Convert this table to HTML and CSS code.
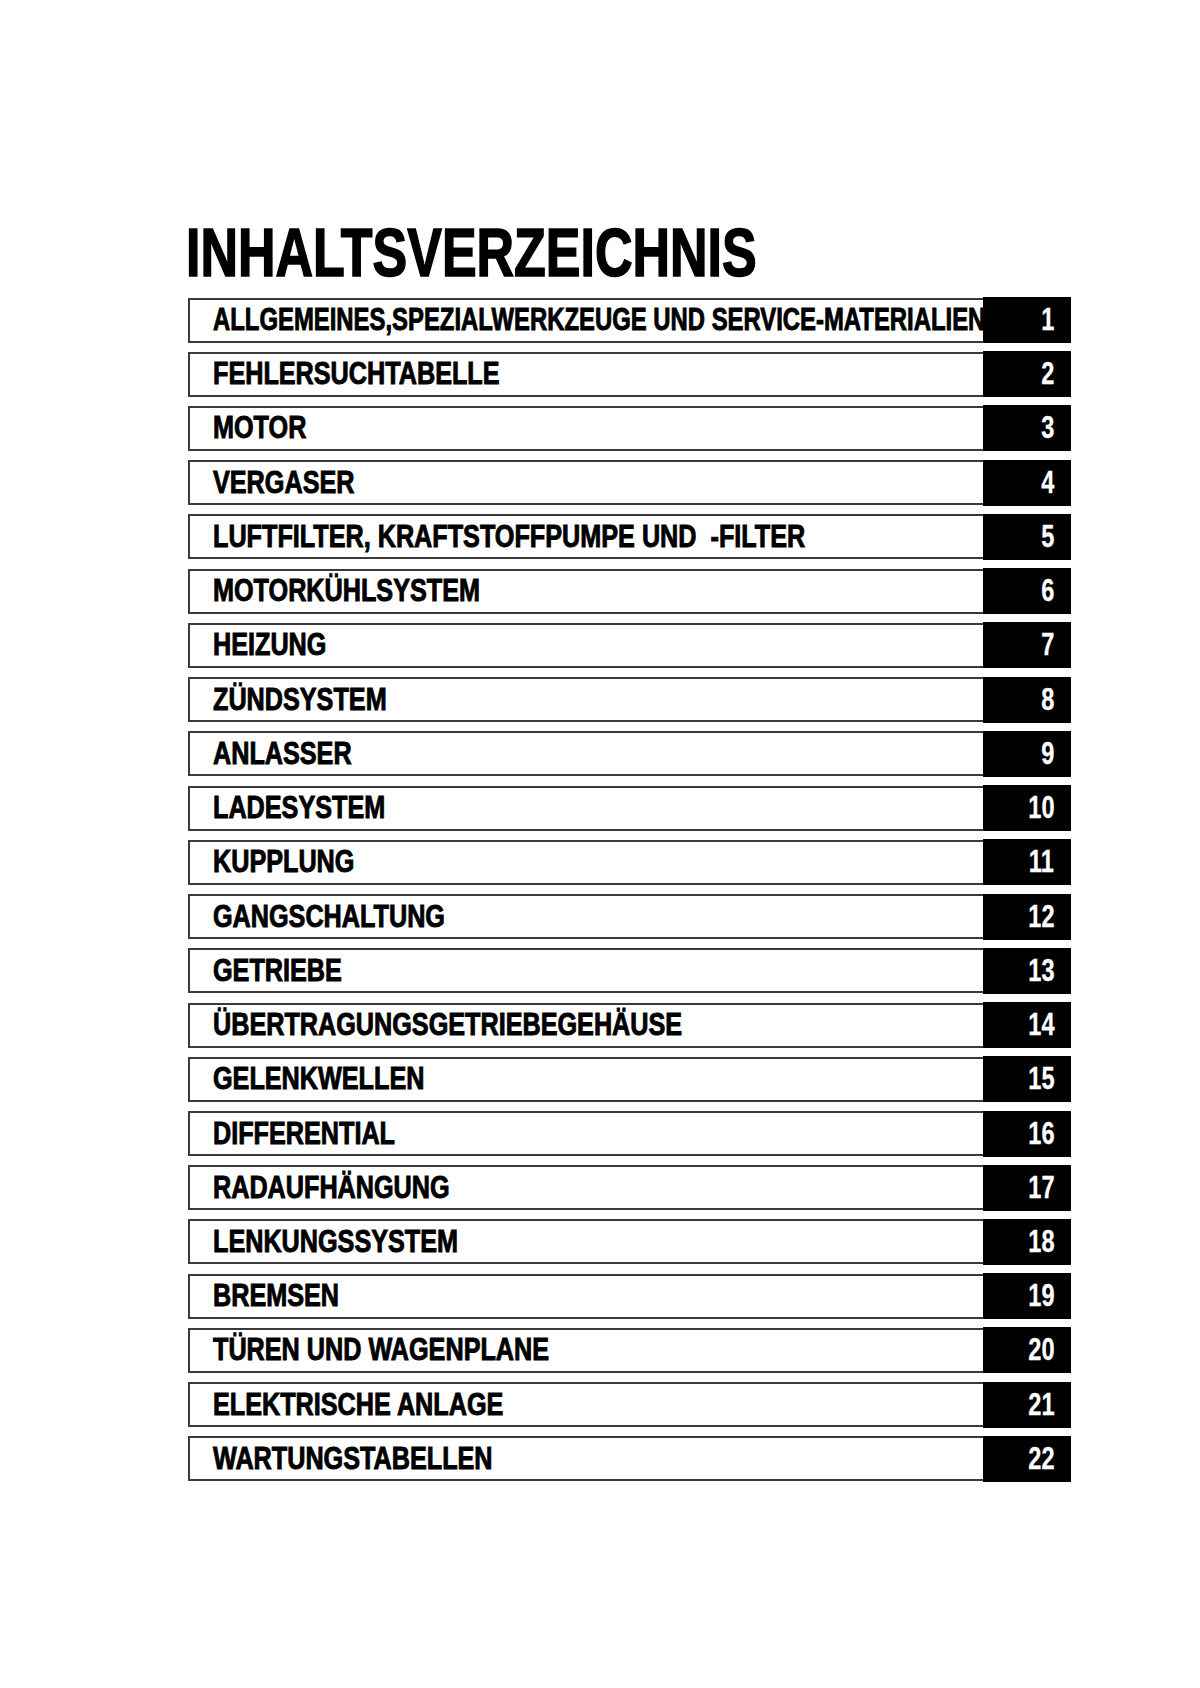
FILE: index.html
```html
<!DOCTYPE html>
<html lang="de">
<head>
<meta charset="utf-8">
<title>Inhaltsverzeichnis</title>
<link rel="stylesheet" href="styles.css">
</head>
<body>
<main class="page">
  <h1 class="title"><span class="title-text">INHALTSVERZEICHNIS</span></h1>
  <ol class="toc">
    <li class="toc-row"><span class="toc-label"><span class="toc-text toc-text--long">ALLGEMEINES,SPEZIALWERKZEUGE UND SERVICE-MATERIALIEN</span></span><span class="toc-num"><span class="toc-digits">1</span></span></li>
    <li class="toc-row"><span class="toc-label"><span class="toc-text">FEHLERSUCHTABELLE</span></span><span class="toc-num"><span class="toc-digits">2</span></span></li>
    <li class="toc-row"><span class="toc-label"><span class="toc-text">MOTOR</span></span><span class="toc-num"><span class="toc-digits">3</span></span></li>
    <li class="toc-row"><span class="toc-label"><span class="toc-text">VERGASER</span></span><span class="toc-num"><span class="toc-digits">4</span></span></li>
    <li class="toc-row"><span class="toc-label"><span class="toc-text">LUFTFILTER, KRAFTSTOFFPUMPE UND &nbsp;-FILTER</span></span><span class="toc-num"><span class="toc-digits">5</span></span></li>
    <li class="toc-row"><span class="toc-label"><span class="toc-text">MOTORKÜHLSYSTEM</span></span><span class="toc-num"><span class="toc-digits">6</span></span></li>
    <li class="toc-row"><span class="toc-label"><span class="toc-text">HEIZUNG</span></span><span class="toc-num"><span class="toc-digits">7</span></span></li>
    <li class="toc-row"><span class="toc-label"><span class="toc-text">ZÜNDSYSTEM</span></span><span class="toc-num"><span class="toc-digits">8</span></span></li>
    <li class="toc-row"><span class="toc-label"><span class="toc-text">ANLASSER</span></span><span class="toc-num"><span class="toc-digits">9</span></span></li>
    <li class="toc-row"><span class="toc-label"><span class="toc-text">LADESYSTEM</span></span><span class="toc-num"><span class="toc-digits">10</span></span></li>
    <li class="toc-row"><span class="toc-label"><span class="toc-text">KUPPLUNG</span></span><span class="toc-num"><span class="toc-digits">11</span></span></li>
    <li class="toc-row"><span class="toc-label"><span class="toc-text">GANGSCHALTUNG</span></span><span class="toc-num"><span class="toc-digits">12</span></span></li>
    <li class="toc-row"><span class="toc-label"><span class="toc-text">GETRIEBE</span></span><span class="toc-num"><span class="toc-digits">13</span></span></li>
    <li class="toc-row"><span class="toc-label"><span class="toc-text">ÜBERTRAGUNGSGETRIEBEGEHÄUSE</span></span><span class="toc-num"><span class="toc-digits">14</span></span></li>
    <li class="toc-row"><span class="toc-label"><span class="toc-text">GELENKWELLEN</span></span><span class="toc-num"><span class="toc-digits">15</span></span></li>
    <li class="toc-row"><span class="toc-label"><span class="toc-text">DIFFERENTIAL</span></span><span class="toc-num"><span class="toc-digits">16</span></span></li>
    <li class="toc-row"><span class="toc-label"><span class="toc-text">RADAUFHÄNGUNG</span></span><span class="toc-num"><span class="toc-digits">17</span></span></li>
    <li class="toc-row"><span class="toc-label"><span class="toc-text">LENKUNGSSYSTEM</span></span><span class="toc-num"><span class="toc-digits">18</span></span></li>
    <li class="toc-row"><span class="toc-label"><span class="toc-text">BREMSEN</span></span><span class="toc-num"><span class="toc-digits">19</span></span></li>
    <li class="toc-row"><span class="toc-label"><span class="toc-text">TÜREN UND WAGENPLANE</span></span><span class="toc-num"><span class="toc-digits">20</span></span></li>
    <li class="toc-row"><span class="toc-label"><span class="toc-text">ELEKTRISCHE ANLAGE</span></span><span class="toc-num"><span class="toc-digits">21</span></span></li>
    <li class="toc-row"><span class="toc-label"><span class="toc-text">WARTUNGSTABELLEN</span></span><span class="toc-num"><span class="toc-digits">22</span></span></li>
  </ol>
</main>
</body>
</html>
```
FILE: styles.css
```css
html, body {
  margin: 0;
  padding: 0;
  background: #ffffff;
}

body {
  font-family: "Liberation Sans", Arial, sans-serif;
  font-weight: bold;
  color: #000;
}

.page {
  padding: 218px 0 0 186px;
}

.title {
  margin: 0;
  font-size: 68px;
  line-height: 68px;
  font-weight: bold;
  white-space: nowrap;
}

.title-text {
  display: inline-block;
  transform: scaleX(0.764);
  transform-origin: left center;
  -webkit-text-stroke: 1.6px #000;
}

.toc {
  list-style: none;
  margin: 11px 0 0 2px;
  padding: 0;
  width: 883px;
  display: flex;
  flex-direction: column;
  gap: 8.24px;
}

.toc-row {
  display: flex;
  align-items: center;
  height: 46px;
}

.toc-label {
  flex: 1;
  min-width: 0;
  height: 45px;
  box-sizing: border-box;
  border: 2px solid #3a3a3a;
  border-right: none;
  display: flex;
  align-items: center;
  padding-left: 23px;
  font-size: 31px;
  white-space: nowrap;
}

.toc-text {
  display: inline-block;
  transform: scaleX(0.813);
  transform-origin: left center;
  -webkit-text-stroke: 0.9px #000;
}

.toc-text--long {
  transform: scaleX(0.77);
}

.toc-num {
  flex: 0 0 88px;
  height: 46px;
  box-sizing: border-box;
  background: #000;
  color: #fff;
  display: flex;
  align-items: center;
  justify-content: flex-end;
  padding-right: 17px;
  font-size: 31px;
}

.toc-digits {
  display: inline-block;
  transform: scaleX(0.76);
  transform-origin: right center;
  -webkit-text-stroke: 0.3px #fff;
}
```
